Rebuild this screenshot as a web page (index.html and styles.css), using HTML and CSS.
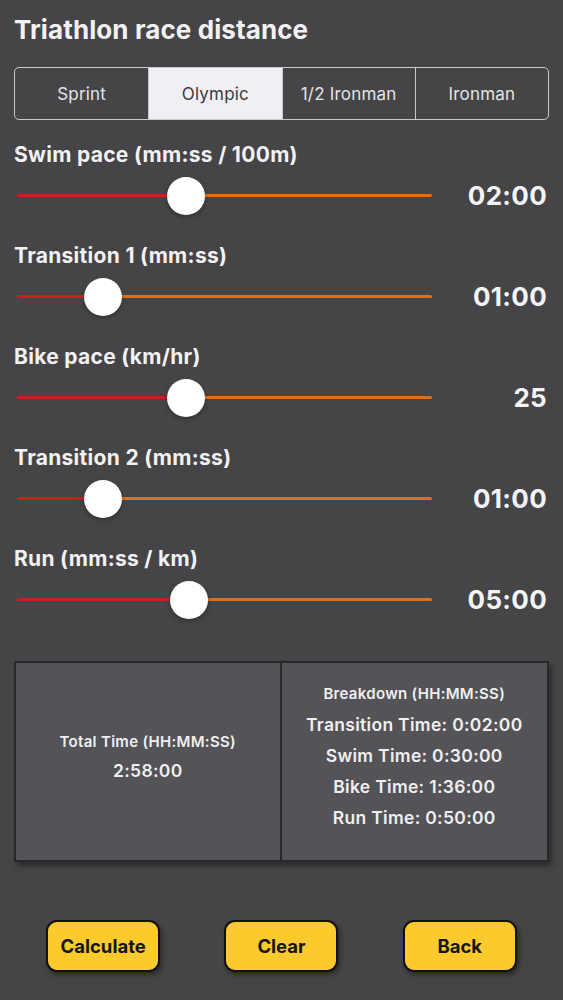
FILE: index.html
```html
<!DOCTYPE html>
<html>
<head>
<meta charset="utf-8">
<title>Triathlon</title>
<link rel="stylesheet" href="styles.css">
</head>
<body>
<div class="page">
  <h1 class="title">Triathlon race distance</h1>
  <div class="segments">
    <div class="seg">Sprint</div>
    <div class="seg active">Olympic</div>
    <div class="seg">1/2 Ironman</div>
    <div class="seg">Ironman</div>
  </div>

  <div class="fields">
    <div class="field">
      <div class="label">Swim pace (mm:ss / 100m)</div>
      <div class="slider-row">
        <div class="slider" style="--v:40.7%"><div class="thumb"></div></div>
        <div class="value">02:00</div>
      </div>
    </div>

    <div class="field">
      <div class="label">Transition 1 (mm:ss)</div>
      <div class="slider-row">
        <div class="slider" style="--v:20.7%"><div class="thumb"></div></div>
        <div class="value">01:00</div>
      </div>
    </div>

    <div class="field">
      <div class="label">Bike pace (km/hr)</div>
      <div class="slider-row">
        <div class="slider" style="--v:40.7%"><div class="thumb"></div></div>
        <div class="value">25</div>
      </div>
    </div>

    <div class="field">
      <div class="label">Transition 2 (mm:ss)</div>
      <div class="slider-row">
        <div class="slider" style="--v:20.7%"><div class="thumb"></div></div>
        <div class="value">01:00</div>
      </div>
    </div>

    <div class="field">
      <div class="label">Run (mm:ss / km)</div>
      <div class="slider-row">
        <div class="slider" style="--v:41.4%"><div class="thumb"></div></div>
        <div class="value">05:00</div>
      </div>
    </div>
  </div>

  <div class="results">
    <div class="cell total">
      <div class="small">Total Time (HH:MM:SS)</div>
      <div class="big">2:58:00</div>
    </div>
    <div class="cell breakdown">
      <div class="small">Breakdown (HH:MM:SS)</div>
      <div class="big">Transition Time: 0:02:00</div>
      <div class="big">Swim Time: 0:30:00</div>
      <div class="big">Bike Time: 1:36:00</div>
      <div class="big">Run Time: 0:50:00</div>
    </div>
  </div>

  <div class="buttons">
    <button class="btn">Calculate</button>
    <button class="btn">Clear</button>
    <button class="btn">Back</button>
  </div>
</div>
</body>
</html>
```

FILE: styles.css
```css
html, body {
  margin: 0;
  padding: 0;
  background: #454446;
}
body {
  font-family: Inter, "Noto Sans", sans-serif;
  color: #f2f2f4;
}
.page {
  width: 563px;
  height: 1000px;
  box-sizing: border-box;
  padding: 0 14px;
  display: flex;
  flex-direction: column;
}
.title {
  margin: 0;
  padding-top: 14px;
  font-size: 26px;
  line-height: 32px;
  font-weight: 700;
  letter-spacing: 0.1px;
}
.segments {
  margin-top: 21px;
  height: 53px;
  box-sizing: border-box;
  border: 1.5px solid #c9c9cb;
  border-radius: 5px;
  display: grid;
  grid-template-columns: repeat(4, 1fr);
  overflow: hidden;
}
.seg {
  display: flex;
  align-items: center;
  justify-content: center;
  font-size: 17px;
  color: #e4e4e6;
  border-left: 1.5px solid #c9c9cb;
  letter-spacing: 0.2px;
}
.seg:first-child {
  border-left: none;
}
.seg.active {
  background: #f0eff4;
  color: #3a3a3c;
}
.fields {
  margin-top: 23px;
  display: flex;
  flex-direction: column;
}
.field {
  display: flex;
  flex-direction: column;
}
.label {
  font-size: 21px;
  line-height: 24px;
  font-weight: 700;
  letter-spacing: 0.3px;
}
.slider-row {
  margin-top: 8px;
  margin-bottom: 28px;
  height: 41px;
  display: flex;
  align-items: center;
}
.slider {
  position: relative;
  margin-left: 3px;
  width: 415px;
  height: 3px;
  border-radius: 2px;
  background: linear-gradient(to right, #c8201f 0, #c8201f var(--v), #d9721c var(--v), #d9721c 100%);
}
.thumb {
  position: absolute;
  top: 50%;
  left: var(--v);
  width: 38px;
  height: 38px;
  border-radius: 50%;
  background: #ffffff;
  transform: translate(-50%, -50%);
  box-shadow: 0 2px 5px rgba(0, 0, 0, 0.3);
}
.value {
  flex: 1;
  text-align: right;
  padding-right: 2px;
  font-size: 26px;
  font-weight: 700;
  color: #f4f4f6;
  letter-spacing: 0.3px;
}
.results {
  margin-top: 13px;
  height: 201px;
  box-sizing: border-box;
  border: 2px solid #28282a;
  background: #545357;
  display: grid;
  grid-template-columns: 1fr 1fr;
  box-shadow: 3px 4px 5px rgba(0, 0, 0, 0.35);
}
.cell {
  display: flex;
  flex-direction: column;
  align-items: center;
  justify-content: center;
  font-weight: 600;
  color: #efeff1;
  letter-spacing: 0.3px;
}
.total {
  border-right: 2px solid #28282a;
  padding-bottom: 8px;
  gap: 7px;
}
.total .small {
  font-size: 15px;
  line-height: 20px;
}
.total .big {
  font-size: 17.5px;
  line-height: 24px;
}
.breakdown {
  padding-bottom: 12px;
}
.breakdown .small {
  font-size: 15px;
  line-height: 31px;
}
.breakdown .big {
  font-size: 17.5px;
  line-height: 31px;
}
.buttons {
  margin-top: 58px;
  display: flex;
  justify-content: space-around;
}
.btn {
  width: 114px;
  height: 52px;
  box-sizing: border-box;
  background: #fdca2d;
  border: 2.5px solid #111111;
  border-radius: 11px;
  font-family: Inter, "Noto Sans", sans-serif;
  font-size: 18.5px;
  font-weight: 700;
  color: #151515;
  box-shadow: 2px 3px 5px rgba(0, 0, 0, 0.4);
  padding: 0;
}
```
